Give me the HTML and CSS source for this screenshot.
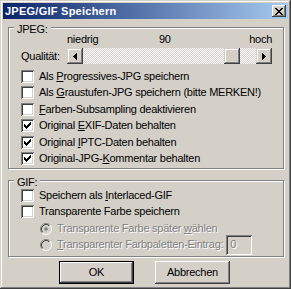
FILE: index.html
```html
<!DOCTYPE html>
<html lang="de">

<head>
    <meta charset="UTF-8">
    <title>JPEG/GIF Speichern</title>
    <link rel="stylesheet" href="styles.css">
</head>

<body>
    <div class="window">
        <div class="titlebar">
            <span class="title">JPEG/GIF Speichern</span>
            <span class="close">
                <svg width="8" height="7" viewBox="0 0 8 7" shape-rendering="crispEdges"><path d="M0 0h2v1h-2z M6 0h2v1h-2z M1 1h2v1h-2z M5 1h2v1h-2z M2 2h4v1h-4z M3 3h2v1h-2z M2 4h4v1h-4z M1 5h2v1h-2z M5 5h2v1h-2z M0 6h2v1h-2z M6 6h2v1h-2z"/></svg>
            </span>
        </div>

        <div class="content">
            <div class="group group-jpeg">
                <span class="legend">JPEG:</span>
                <div class="scale">
                    <span>niedrig</span>
                    <span>90</span>
                    <span>hoch</span>
                </div>
                <div class="quality">
                    <span class="quality-label">Qualität:</span>
                    <div class="scrollbar">
                        <span class="sb-btn">
                            <svg width="4" height="7" viewBox="0 0 4 7" shape-rendering="crispEdges"><path d="M3 0h1v7h-1z M2 1h1v5h-1z M1 2h1v3h-1z M0 3h1v1h-1z"/></svg>
                        </span>
                        <span class="sb-track"><span class="sb-thumb"></span></span>
                        <span class="sb-btn">
                            <svg width="4" height="7" viewBox="0 0 4 7" shape-rendering="crispEdges"><path d="M0 0h1v7h-1z M1 1h1v5h-1z M2 2h1v3h-1z M3 3h1v1h-1z"/></svg>
                        </span>
                    </div>
                </div>
                <div class="rows">
                    <label class="row"><span class="cb"></span><span>Als <u>P</u>rogressives-JPG speichern</span></label>
                    <label class="row"><span class="cb"></span><span>Als <u>G</u>raustufen-JPG speichern (bitte MERKEN!)</span></label>
                    <label class="row"><span class="cb"></span><span><u>F</u>arben-Subsampling deaktivieren</span></label>
                    <label class="row"><span class="cb checked"><svg width="7" height="7" viewBox="0 0 7 7" shape-rendering="crispEdges"><path d="M6 0h1v1h-1z M5 1h2v1h-2z M0 2h1v1h-1z M4 2h3v1h-3z M0 3h2v1h-2z M3 3h3v1h-3z M0 4h5v1h-5z M1 5h3v1h-3z M2 6h1v1h-1z"/></svg></span><span>Original <u>E</u>XIF-Daten behalten</span></label>
                    <label class="row"><span class="cb checked"><svg width="7" height="7" viewBox="0 0 7 7" shape-rendering="crispEdges"><path d="M6 0h1v1h-1z M5 1h2v1h-2z M0 2h1v1h-1z M4 2h3v1h-3z M0 3h2v1h-2z M3 3h3v1h-3z M0 4h5v1h-5z M1 5h3v1h-3z M2 6h1v1h-1z"/></svg></span><span>Original <u>I</u>PTC-Daten behalten</span></label>
                    <label class="row"><span class="cb checked"><svg width="7" height="7" viewBox="0 0 7 7" shape-rendering="crispEdges"><path d="M6 0h1v1h-1z M5 1h2v1h-2z M0 2h1v1h-1z M4 2h3v1h-3z M0 3h2v1h-2z M3 3h3v1h-3z M0 4h5v1h-5z M1 5h3v1h-3z M2 6h1v1h-1z"/></svg></span><span>Original-JPG-<u>K</u>ommentar behalten</span></label>
                </div>
            </div>

            <div class="group group-gif">
                <span class="legend">GIF:</span>
                <div class="rows">
                    <label class="row"><span class="cb"></span><span>Speichern als <u>I</u>nterlaced-GIF</span></label>
                    <label class="row"><span class="cb"></span><span>Transparente Farbe speichern</span></label>
                </div>
                <div class="radios">
                    <label class="row disabled">
                        <svg class="radio" width="12" height="12" viewBox="0 0 12 12">
                            <path d="M2.11 9.89A5.5 5.5 0 0 1 9.89 2.11" fill="none" stroke="#808080"/>
                            <path d="M9.89 2.11A5.5 5.5 0 0 1 2.11 9.89" fill="none" stroke="#fff"/>
                            <circle cx="6" cy="6" r="4" fill="#d4d0c8"/>
                            <path d="M2.82 9.18A4.5 4.5 0 0 1 9.18 2.82" fill="none" stroke="#404040"/>
                            <circle cx="6" cy="6" r="1.8" fill="#808080"/>
                        </svg>
                        <span>Transparente Farbe später <u>w</u>ählen</span>
                    </label>
                    <label class="row disabled">
                        <svg class="radio" width="12" height="12" viewBox="0 0 12 12">
                            <path d="M2.11 9.89A5.5 5.5 0 0 1 9.89 2.11" fill="none" stroke="#808080"/>
                            <path d="M9.89 2.11A5.5 5.5 0 0 1 2.11 9.89" fill="none" stroke="#fff"/>
                            <circle cx="6" cy="6" r="4" fill="#d4d0c8"/>
                            <path d="M2.82 9.18A4.5 4.5 0 0 1 9.18 2.82" fill="none" stroke="#404040"/>
                        </svg>
                        <span><u>T</u>ransparenter Farbpaletten-Eintrag:</span>
                        <span class="edit">0</span>
                    </label>
                </div>
            </div>

            <div class="buttons">
                <button class="btn btn-default">OK</button>
                <button class="btn">Abbrechen</button>
            </div>
        </div>
    </div>
</body>

</html>
```

FILE: styles.css
```css
body {
    margin: 0;
    font-family: 'Liberation Sans', Arial, sans-serif;
    font-size: 11px;
    line-height: 13px;
    letter-spacing: -0.25px;
    color: #000;
    background-color: #d4d0c8;
}

u {
    text-underline-offset: 1px;
}

.window {
    width: 291px;
    height: 289px;
    box-sizing: border-box;
    padding: 3px;
    background-color: #d4d0c8;
    box-shadow: inset -1px -1px #404040, inset 1px 1px #d4d0c8, inset -2px -2px #808080, inset 2px 2px #fff;
}

.titlebar {
    height: 16px;
    display: flex;
    align-items: center;
    justify-content: space-between;
    padding-left: 2px;
    background: linear-gradient(to right, #0a246a, #a6caf0);
}

.title {
    color: #fff;
    font-weight: bold;
    letter-spacing: 0.25px;
}

.close {
    width: 14px;
    height: 12px;
    margin-right: 2px;
    display: flex;
    align-items: center;
    justify-content: center;
    background-color: #d4d0c8;
    box-shadow: inset -1px -1px #404040, inset 1px 1px #fff, inset -2px -2px #808080;
}

.content {
    padding: 8px 4px 0 5px;
}

/* etched group box */
.group {
    box-sizing: border-box;
    border: 1px solid #808080;
    box-shadow: inset 1px 1px #fff, 1px 1px #fff;
    padding-left: 12px;
}

.group-jpeg {
    height: 142px;
}

.group-gif {
    height: 77px;
    margin-top: 11px;
}

.legend {
    display: block;
    width: fit-content;
    margin: -5px 0 -3px -7px;
    padding: 0 3px;
    background-color: #d4d0c8;
}

.scale {
    display: grid;
    grid-template-columns: 92px 1fr auto;
    width: 205px;
    margin: 0 0 2px 46px;
}

.quality {
    display: flex;
    align-items: center;
    margin-bottom: 4.3px;
}

.quality-label {
    width: 46px;
}

.scrollbar {
    display: flex;
    width: 205px;
    height: 16px;
}

.sb-btn,
.sb-thumb {
    width: 16px;
    height: 16px;
    flex: none;
    display: flex;
    align-items: center;
    justify-content: center;
    background-color: #d4d0c8;
    box-shadow: inset -1px -1px #404040, inset 1px 1px #d4d0c8, inset -2px -2px #808080, inset 2px 2px #fff;
}

.sb-track {
    flex: 1;
    display: flex;
    background-color: #d4d0c8;
    background-image: conic-gradient(#fff 25%, #d4d0c8 0 50%, #fff 0 75%, #d4d0c8 0);
    background-size: 2px 2px;
}

.sb-thumb {
    margin-left: 141px;
}

.row {
    display: flex;
    align-items: center;
    height: 16.4px;
    white-space: nowrap;
}

.group-gif .rows {
    padding-top: 1px;
}

.group-gif .row {
    height: 16px;
}

.cb {
    width: 13px;
    height: 13px;
    box-sizing: border-box;
    flex: none;
    margin-right: 5px;
    padding: 3px;
    display: flex;
    background-color: #fff;
    box-shadow: inset 1px 1px #808080, inset -1px -1px #fff, inset 2px 2px #404040, inset -2px -2px #d4d0c8;
}

.radios {
    margin-top: 1.5px;
    padding-left: 19px;
}

.radio {
    flex: none;
    margin-right: 5px;
}

.disabled {
    color: #808080;
    text-shadow: 1px 1px 0 #fff;
}

.edit {
    width: 26px;
    height: 20px;
    box-sizing: border-box;
    flex: none;
    margin-left: 3px;
    padding-left: 4px;
    display: flex;
    align-items: center;
    box-shadow: inset 1px 1px #808080, inset -1px -1px #fff, inset 2px 2px #404040, inset -2px -2px #d4d0c8;
}

.buttons {
    display: flex;
    gap: 21px;
    margin-top: 4px;
    padding-left: 51px;
}

.btn {
    width: 75px;
    height: 23px;
    box-sizing: border-box;
    padding: 0;
    border: none;
    font: inherit;
    letter-spacing: inherit;
    color: #000;
    background-color: #d4d0c8;
    box-shadow: inset -1px -1px #404040, inset 1px 1px #fff, inset -2px -2px #808080, inset 2px 2px #d4d0c8;
}

.btn-default {
    border: 1px solid #000;
}
```
